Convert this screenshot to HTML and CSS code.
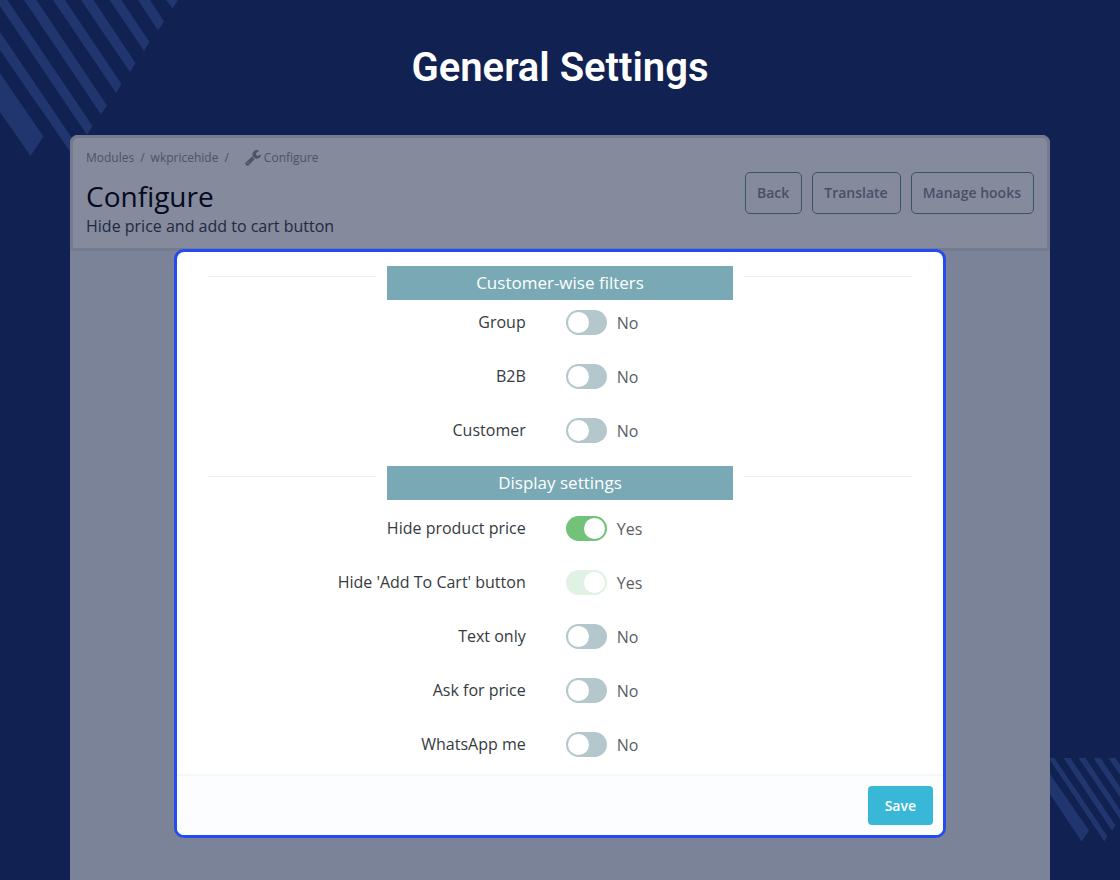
FILE: index.html
```
<!DOCTYPE html>
<html lang="en">
<head>
<meta charset="utf-8">
<meta name="viewport" content="width=device-width, initial-scale=1">
<title>General Settings</title>
<link rel="stylesheet" href="styles.css">
</head>
<body>
<div class="page">
  <svg class="stripes stripes-top" width="180" height="160" viewBox="0 0 180 160" aria-hidden="true">
    <path d="M0 73 43.500 136.500 30.500 156 0 112ZM0 32 78 147 73 156 0 50ZM-4 0H7.500L92.500 126 87 135ZM24 0H36.500L107 105.500 101 114.500ZM53 0H65L121.500 84 116 93ZM81 0H93.500L135.500 63 130 72ZM109.500 0H121.500L149.500 42 144 51ZM138 0H150L164 21.500 158 30.500ZM166 0H178L172.500 8.500Z"/>
  </svg>
  <svg class="stripes stripes-bottom" width="70" height="84" viewBox="0 0 70 84" aria-hidden="true">
    <path d="M0 16 39 72.500 31.500 83.500 0 36ZM0 0H4.500L57.500 78.500 54.500 83.500 0 2ZM13.500 0H20.500L65.500 67.500 62 72.500ZM28.500 0H35.500L70 52V61ZM43.500 0H50.500L70 29V39ZM58.500 0H65.500L70 7V17Z"/>
  </svg>

  <h1 class="page-title">General Settings</h1>

  <main class="panel">
    <header class="panel-header">
      <div>
        <nav class="breadcrumb" aria-label="Breadcrumb">
          <a href="#">Modules</a><span>/</span><a href="#">wkpricehide</a><span>/</span>
          <a class="current" href="#">
            <svg width="16" height="16" viewBox="60 20 1670 1640" aria-hidden="true"><path d="M448 1472q0-26-19-45t-45-19-45 19-19 45 19 45 45 19 45-19 19-45zm644-420l-682 682q-37 37-90 37-52 0-91-37l-106-108q-38-36-38-90 0-53 38-91l681-681q39 98 114.500 173.500t173.500 114.500zm634-435q0 39-23 106-47 134-164.500 217.500t-258.500 83.500q-185 0-316.500-131.500t-131.500-316.500 131.500-316.500 316.500-131.500q58 0 121.500 16.500t107.500 46.500q16 11 16 28t-16 28l-293 169v224l193 107q5-3 79-48.500t135.500-81 70.500-35.500q15 0 23.500 10t8.500 25z" transform="translate(0 -110)"/></svg>Configure</a>
        </nav>
        <h2 class="heading">Configure</h2>
        <p class="subheading">Hide price and add to cart button</p>
      </div>
      <div class="actions">
        <button type="button">Back</button>
        <button type="button">Translate</button>
        <button type="button">Manage hooks</button>
      </div>
    </header>

    <form class="card">
      <div class="card-body">
        <section class="group">
          <h3 class="group-title"><span>Customer-wise filters</span></h3>
          <div class="rows">
            <div class="row"><label for="group">Group</label><div class="control"><input class="switch" type="checkbox" id="group"><span>No</span></div></div>
            <div class="row"><label for="b2b">B2B</label><div class="control"><input class="switch" type="checkbox" id="b2b"><span>No</span></div></div>
            <div class="row"><label for="customer">Customer</label><div class="control"><input class="switch" type="checkbox" id="customer"><span>No</span></div></div>
          </div>
        </section>
        <section class="group group-display">
          <h3 class="group-title"><span>Display settings</span></h3>
          <div class="rows">
            <div class="row"><label for="price">Hide product price</label><div class="control"><input class="switch" type="checkbox" id="price" checked><span>Yes</span></div></div>
            <div class="row"><label for="cart">Hide 'Add To Cart' button</label><div class="control"><input class="switch" type="checkbox" id="cart" checked disabled><span>Yes</span></div></div>
            <div class="row"><label for="text">Text only</label><div class="control"><input class="switch" type="checkbox" id="text"><span>No</span></div></div>
            <div class="row"><label for="ask">Ask for price</label><div class="control"><input class="switch" type="checkbox" id="ask"><span>No</span></div></div>
            <div class="row"><label for="whatsapp">WhatsApp me</label><div class="control"><input class="switch" type="checkbox" id="whatsapp"><span>No</span></div></div>
          </div>
        </section>
      </div>
      <footer class="card-footer"><button class="save" type="submit">Save</button></footer>
    </form>
  </main>
</div>
</body>
</html>
```
FILE: styles.css
```
* { box-sizing: border-box; }

body {
  margin: 0;
  background: #112151;
  font-family: "Open Sans", "Noto Sans", sans-serif;
}

.page {
  position: relative;
  display: flex;
  flex-direction: column;
  min-height: 100vh;
  padding: 0 70px;
}

.stripes { position: absolute; fill: #21366f; }
.stripes-top { top: 0; left: 0; }
.stripes-bottom { right: 0; bottom: 38px; }

.page-title {
  margin: 0;
  padding: 44px 0 43px;
  color: #fff;
  font: 600 40px/48px Roboto, sans-serif;
  text-align: center;
}

.panel {
  position: relative;
  flex: 1;
  padding-bottom: 42px;
  border-radius: 8px 8px 0 0;
  background: #7b8398;
}

.panel-header {
  display: flex;
  justify-content: space-between;
  align-items: center;
  padding: 11px 13px;
  border: 3px solid #757b8f;
  border-radius: 8px 8px 0 0;
  background: #858a9d;
}

.breadcrumb {
  display: flex;
  align-items: center;
  gap: 6px;
  color: #4e5367;
  font-size: 12px;
  line-height: 18px;
}
.breadcrumb a { color: inherit; text-decoration: none; }
.breadcrumb .current {
  display: flex;
  align-items: center;
  gap: 3px;
  margin-left: 10px;
}
.breadcrumb svg { fill: #4e5367; }

.heading {
  margin: 10px 0 0;
  color: #040a20;
  font-size: 28px;
  font-weight: 400;
  line-height: 38px;
}

.subheading {
  margin: 0;
  color: #23293f;
  font-size: 16px;
  line-height: 22px;
}

.actions { display: flex; gap: 10px; }
.actions button {
  height: 42px;
  padding: 0 12px 0 11px;
  border: 1px solid #3b526c;
  border-radius: 5px;
  background: none;
  color: #4a4f65;
  font: 600 14px/20px "Open Sans", sans-serif;
}

.card {
  position: relative;
  max-width: 772px;
  margin: -2px auto 0;
  overflow: hidden;
  border: 3px solid #224bf2;
  border-radius: 10px;
  background: #fff;
}

.card-body { padding: 14px 31px 17px; }

.group-display { margin-top: 23px; }

.group-title {
  display: flex;
  gap: 11px;
  margin: 0;
  color: #fff;
  font-size: 17px;
  font-weight: 400;
  line-height: 34px;
  text-align: center;
}
.group-title::before,
.group-title::after {
  content: "";
  flex: 1;
  height: 10px;
  border-bottom: 1px solid #eee;
}
.group-title span { width: 346px; background: #79a9b5; }

.rows {
  display: grid;
  gap: 29px;
  padding-top: 10px;
}
.group-display .rows { padding-top: 16px; }

.row {
  display: grid;
  grid-template-columns: 12fr 13fr;
  gap: 40px;
  height: 25px;
  color: #363a41;
  font-size: 16px;
  line-height: 24px;
}
.row label { padding-right: 1px; text-align: right; }

.control {
  display: flex;
  align-items: center;
  gap: 10px;
  margin-left: -1px;
  color: #5a5e65;
}

.switch {
  appearance: none;
  width: 41px;
  height: 25px;
  margin: 0;
  padding: 2px;
  border-radius: 13px;
  background: #b3c7cd;
}
.switch::before {
  content: "";
  display: block;
  width: 21px;
  height: 21px;
  border-radius: 50%;
  background: #fff;
}
.switch:checked { background: #72c279; }
.switch:checked::before { margin-left: auto; }
.switch:disabled { background: #e0f2e4; }

.card-footer {
  display: flex;
  justify-content: flex-end;
  padding: 10px;
  border-top: 2px solid #f5f6f7;
  background: #fcfdfe;
}

.save {
  height: 39px;
  padding: 0 17px;
  border: 0;
  border-radius: 4px;
  background: #38b7d7;
  color: #fff;
  font: 600 14px/20px "Open Sans", sans-serif;
}
```
